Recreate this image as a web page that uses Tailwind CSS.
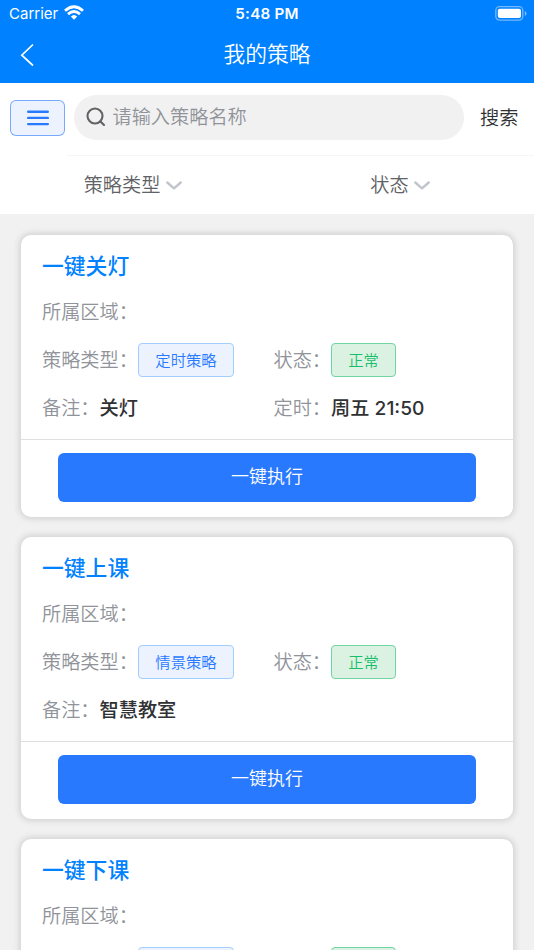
<!DOCTYPE html>
<html lang="zh-CN">
<head>
<meta charset="utf-8">
<title>我的策略</title>
<script src="https://cdn.jsdelivr.net/npm/@tailwindcss/browser@4"></script>
</head>
<body class="flex h-[950px] w-[534px] flex-col overflow-hidden bg-[#f1f1f1] font-['Inter','Noto_Sans_CJK_SC',sans-serif] text-[19.2px] font-[350] text-[#303133]">
<header class="h-[83px] shrink-0 bg-[#0081ff] text-white">
  <div class="grid h-7 grid-cols-3 items-center pl-[9px] pr-[7px]">
    <div class="flex items-center gap-[6px] text-[15px] font-normal leading-none">
      <span class="-mt-px">Carrier</span>
      <svg width="20" height="15" viewBox="0 0 20 15" class="-mt-[3px]" fill="none" stroke="#fff" stroke-width="2.8"><path d="M1 5.7Q10-2.3 19 5.7"/><path d="M4 9.1Q10 3.8 16 9.1"/><path d="M6.8 11.5Q10 8.4 13.2 11.5L10 14.7Z" fill="#fff" stroke="none"/></svg>
    </div>
    <div class="pr-[2px] text-center text-[15.2px] font-semibold leading-none tracking-[0.2px]">5:48 PM</div>
    <svg class="-mt-[2px] justify-self-end" width="32" height="15" viewBox="0 0 32 15" fill="none"><rect x=".8" y=".7" width="27" height="13.4" rx="3.8" stroke="#fff" stroke-opacity=".45" stroke-width="1.3"/><rect x="2.8" y="2.7" width="23.2" height="9.4" rx="2" fill="#fff"/><path d="M29.8 5v5q1.7-.8 1.7-2.5T29.8 5Z" fill="#fff" fill-opacity=".5"/></svg>
  </div>
  <div class="grid h-[53px] grid-cols-[1fr_auto_1fr] items-center px-5">
    <svg width="15" height="24" viewBox="0 0 15 24" fill="none" stroke="#fff" stroke-width="1.7"><path d="M13 1.5 1.8 12.2 13 22.5"/></svg>
    <h1 class="pt-px text-[21.8px] font-[350] leading-none">我的策略</h1>
  </div>
</header>
<section class="h-[131px] shrink-0 bg-white">
  <div class="flex h-[72px] items-center pl-[10px]">
    <button class="-mt-[2px] flex h-[36px] w-[55px] items-center justify-center rounded-[6px] border border-[#2979ff]/60 bg-[#ecf3ff]">
      <svg width="22" height="16" viewBox="0 0 22 16" stroke="#2979ff" stroke-width="2.4" stroke-linecap="round"><path d="M1.2 1.7H20.8M1.2 7.9H20.8M1.2 14.1H20.8"/></svg>
    </button>
    <div class="-mt-[4px] ml-[9px] flex h-[45px] w-[390px] items-center rounded-full bg-[#f1f1f1] pl-[12px] text-[#909399]">
      <svg width="20" height="20" viewBox="0 0 20 20" fill="none" stroke="#606266" stroke-width="2.1" stroke-linecap="round"><circle cx="9" cy="9" r="7.5"/><path d="m14.4 14.4 3.6 3.6"/></svg>
      <span class="ml-[6.5px] pt-px leading-none">请输入策略名称</span>
    </div>
    <span class="-mt-[2px] ml-4 pt-px leading-none">搜索</span>
  </div>
  <div class="ml-[67px] flex h-[59px] border-t border-[#f6f6f6] text-[#606266]">
    <div class="flex w-[132px] items-center justify-center gap-[6px] pt-px leading-none">
      <span>策略类型</span>
      <svg width="16" height="9" viewBox="0 0 16 9" fill="none" stroke="#c0c4cc" stroke-width="2.4" stroke-linecap="round" stroke-linejoin="round"><path d="m1.3 1.5 6.7 5.8 6.7-5.8"/></svg>
    </div>
    <div class="flex flex-1 items-center justify-center gap-[5px] pr-[1px] pl-[68px] pt-px leading-none">
      <span>状态</span>
      <svg width="16" height="9" viewBox="0 0 16 9" fill="none" stroke="#c0c4cc" stroke-width="2.4" stroke-linecap="round" stroke-linejoin="round"><path d="m1.3 1.5 6.7 5.8 6.7-5.8"/></svg>
    </div>
  </div>
</section>
<main class="flex min-h-0 flex-1 flex-col gap-[20.5px] px-[21px] pt-[21px] leading-none">
  <article class="h-[281.5px] shrink-0 rounded-[10px] bg-white pt-[10px] shadow-[0_0_7px_1px_rgba(0,0,0,0.16)]">
    <div class="px-[21px]">
      <h2 class="flex h-[44px] items-center pb-px text-[21.8px] font-medium text-[#0081ff]">一键关灯</h2>
      <div class="flex h-12 items-center text-[#909399]">所属区域：</div>
      <div class="grid h-12 grid-cols-[231.5px_1fr] items-center">
        <div class="flex items-center text-[#909399]">策略类型：<span class="-mt-[2px] flex h-[34px] w-[96px] items-center justify-center rounded-[4px] border border-[#a0cfff] bg-[#ecf3ff] pt-px text-[15.3px] text-[#2979ff]">定时策略</span></div>
        <div class="flex items-center text-[#909399]">状态：<span class="-mt-[2px] flex h-[34px] w-[65px] items-center justify-center rounded-[4px] border border-[#71d5a1] bg-[#dbf1e1] pt-px text-[15.3px] text-[#19be6b]">正常</span></div>
      </div>
      <div class="grid h-12 grid-cols-[231.5px_1fr] items-center">
        <div class="flex items-center text-[#909399]">备注：<span class="font-medium text-[#303133]">关灯</span></div>
        <div class="flex items-center text-[#909399]">定时：<span class="font-medium text-[#303133]">周五 21:50</span></div>
      </div>
    </div>
    <div class="mt-[6px] border-t border-[#e0e0e0] px-[37px] pt-[13px]">
      <button class="flex h-[49px] w-full items-center justify-center rounded-[6px] bg-[#2979ff] pb-px text-[18px] text-white">一键执行</button>
    </div>
  </article>
  <article class="h-[281.5px] shrink-0 rounded-[10px] bg-white pt-[10px] shadow-[0_0_7px_1px_rgba(0,0,0,0.16)]">
    <div class="px-[21px]">
      <h2 class="flex h-[44px] items-center pb-px text-[21.8px] font-medium text-[#0081ff]">一键上课</h2>
      <div class="flex h-12 items-center text-[#909399]">所属区域：</div>
      <div class="grid h-12 grid-cols-[231.5px_1fr] items-center">
        <div class="flex items-center text-[#909399]">策略类型：<span class="-mt-[2px] flex h-[34px] w-[96px] items-center justify-center rounded-[4px] border border-[#a0cfff] bg-[#ecf3ff] pt-px text-[15.3px] text-[#2979ff]">情景策略</span></div>
        <div class="flex items-center text-[#909399]">状态：<span class="-mt-[2px] flex h-[34px] w-[65px] items-center justify-center rounded-[4px] border border-[#71d5a1] bg-[#dbf1e1] pt-px text-[15.3px] text-[#19be6b]">正常</span></div>
      </div>
      <div class="flex h-12 items-center text-[#909399]">备注：<span class="font-medium text-[#303133]">智慧教室</span></div>
    </div>
    <div class="mt-[6px] border-t border-[#e0e0e0] px-[37px] pt-[13px]">
      <button class="flex h-[49px] w-full items-center justify-center rounded-[6px] bg-[#2979ff] pb-px text-[18px] text-white">一键执行</button>
    </div>
  </article>
  <article class="h-[281.5px] shrink-0 rounded-[10px] bg-white pt-[10px] shadow-[0_0_7px_1px_rgba(0,0,0,0.16)]">
    <div class="px-[21px]">
      <h2 class="flex h-[44px] items-center pb-px text-[21.8px] font-medium text-[#0081ff]">一键下课</h2>
      <div class="flex h-12 items-center text-[#909399]">所属区域：</div>
      <div class="grid h-12 grid-cols-[231.5px_1fr] items-center">
        <div class="flex items-center text-[#909399]">策略类型：<span class="-mt-[2px] flex h-[34px] w-[96px] items-center justify-center rounded-[4px] border border-[#a0cfff] bg-[#ecf3ff] pt-px text-[15.3px] text-[#2979ff]">情景策略</span></div>
        <div class="flex items-center text-[#909399]">状态：<span class="-mt-[2px] flex h-[34px] w-[65px] items-center justify-center rounded-[4px] border border-[#71d5a1] bg-[#dbf1e1] pt-px text-[15.3px] text-[#19be6b]">正常</span></div>
      </div>
    </div>
  </article>
</main>
</body>
</html>
